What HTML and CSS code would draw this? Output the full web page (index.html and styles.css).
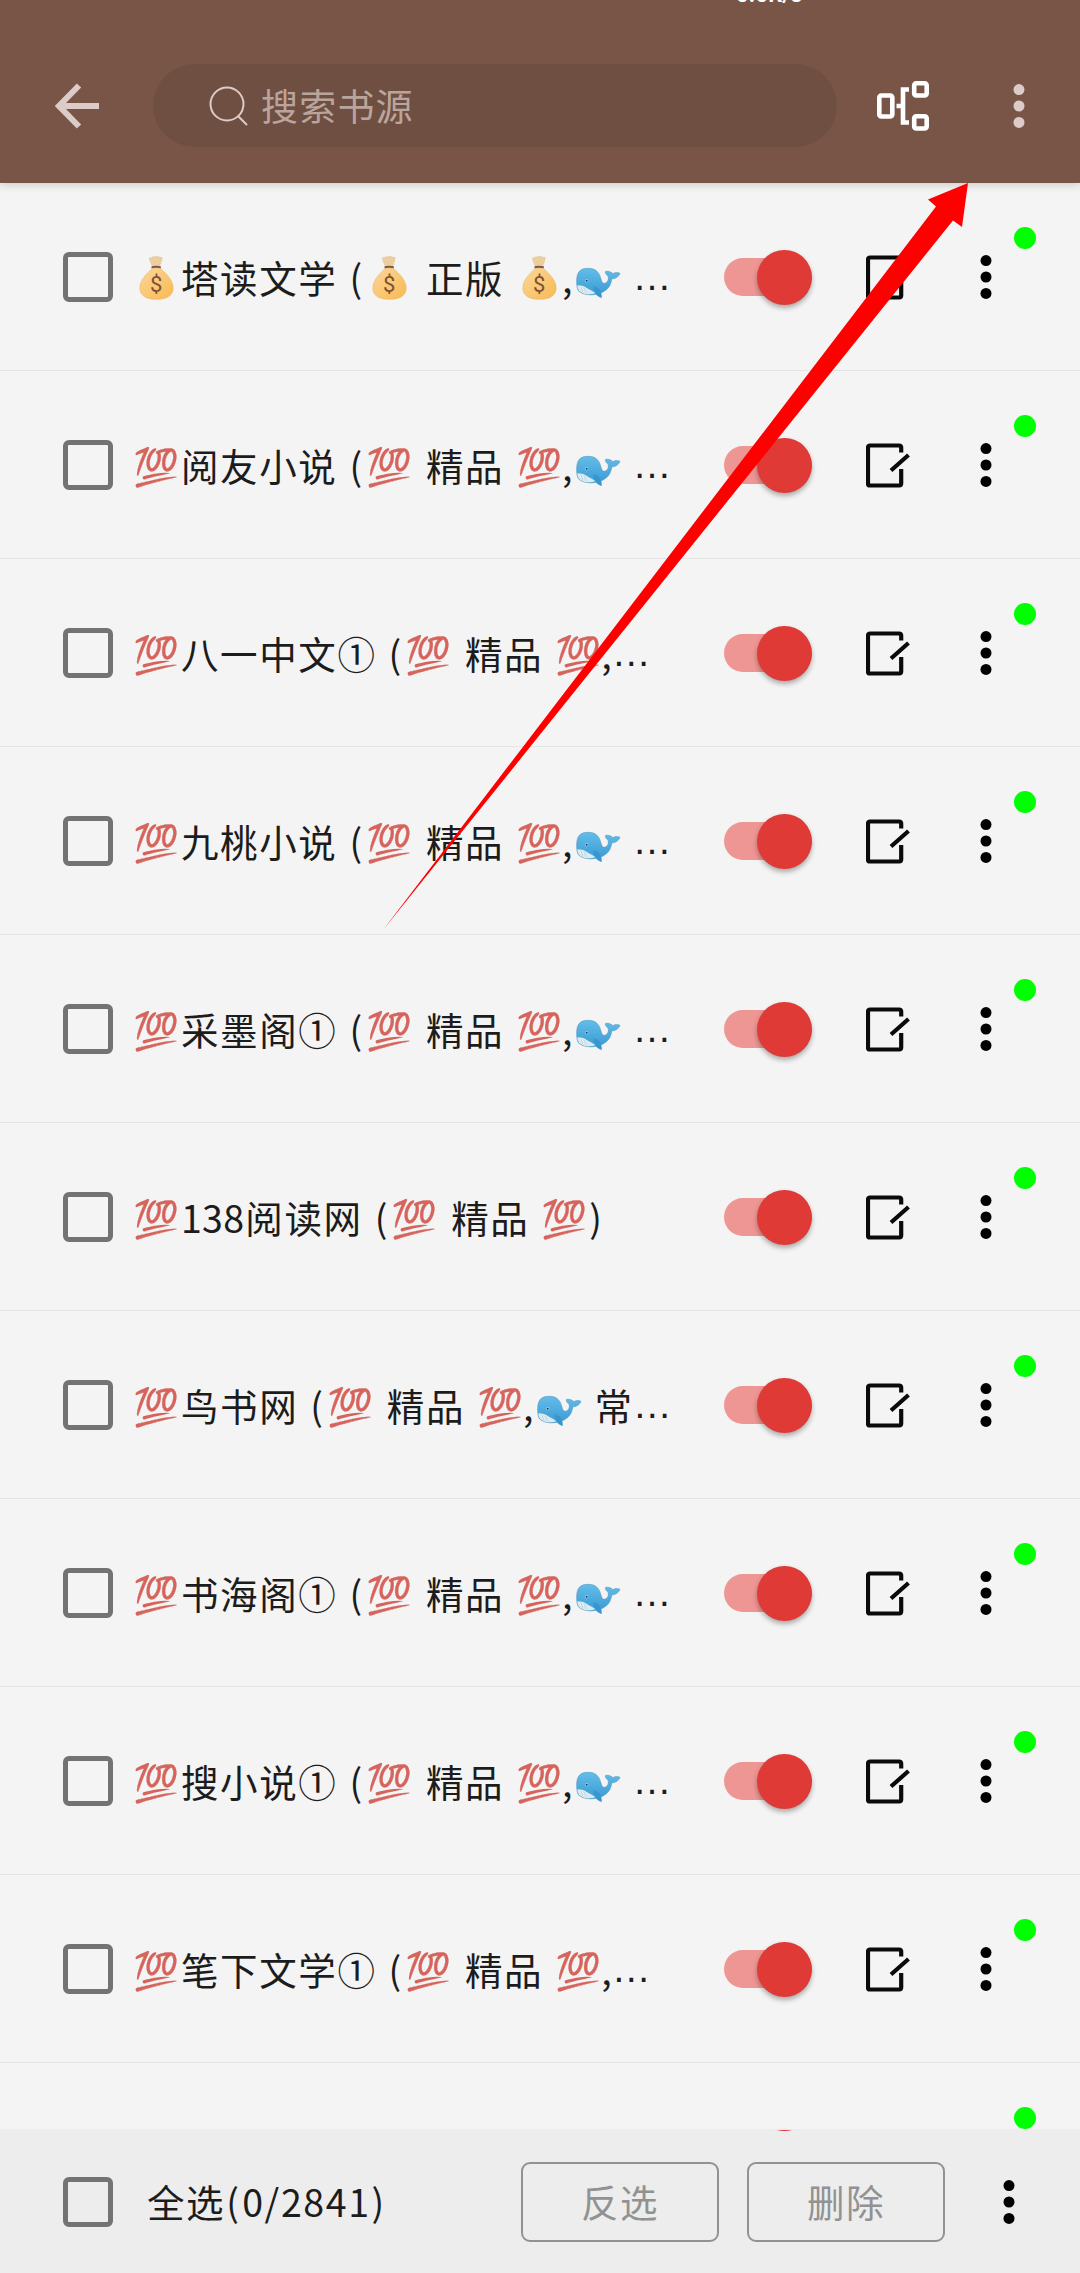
FILE: index.html
```html
<!DOCTYPE html>
<html lang="zh-CN">
<head>
<meta charset="utf-8">
<title>书源管理</title>
<link rel="stylesheet" href="styles.css">
</head>
<body>
<svg class="defs" aria-hidden="true">
  <linearGradient id="sea" x2="0" y2="1"><stop offset="0" stop-color="#63bdea"/><stop offset="1" stop-color="#3b9bd3"/></linearGradient>
  <linearGradient id="gold" x1="0" x2="1" y2="1"><stop offset="0" stop-color="#fbd79b"/><stop offset="1" stop-color="#f9b950"/></linearGradient>
  <symbol id="edit" viewBox="0 0 46 46"><path d="M35.2 10.5V5.5a2 2 0 0 0-2-2H4a2 2 0 0 0-2 2v36a2 2 0 0 0 2 2h29.200a2 2 0 0 0 2-2V27M25 28.500 42.500 13" fill="none" stroke="#0a0a0a" stroke-width="4.200"/></symbol>
  <symbol id="more" viewBox="0 0 12 46"><circle cx="6" cy="6.600" r="5.500"/><circle cx="6" cy="23" r="5.500"/><circle cx="6" cy="39.400" r="5.500"/></symbol>
  <symbol id="whale" viewBox="0 0 138 96">
    <path d="M5 42C5 12 18 4 40 4c24 0 34 14 39 36 4 14 15 10 20 0 2-5 1-10 0-13-7-4-9-10-7-14 10-1 17 2 22 7 6-4 14-4 21-1-4 11-14 16-25 17-2 20-12 34-33 42-22 8-50 8-66-6C6 66 5 54 5 42Z" fill="url(#sea)" stroke="#5b9dbf" stroke-width="2"/>
    <path d="M7 55c14 1 22 3 30 9 8 5 16 8 25 15-18 6-40 3-50-8-3-4-5-10-5-16Z" fill="#dcebf2"/>
    <path d="M18 60l5 15M28 63l6 16" stroke="#b5ccd8" stroke-width="2"/>
    <path d="M56 57c-1 17 7 31 24 36 1-11-2-20-10-30Z" fill="#3796cf"/>
    <circle cx="35" cy="41" r="5" fill="#a5ddf5"/><circle cx="35" cy="41" r="3" fill="#14384e"/>
  </symbol>
  <symbol id="bag" viewBox="0 0 104 132">
    <path d="M40 31C34 20 31 11 31 5c6 2 8-2 12-3 4 2 8-1 12-1 5 2 7 4 14 3-1 10-4 18-8 27Z" fill="#edcf9f" stroke="#dfbd86" stroke-width="1.500"/>
    <path d="M38 38c8-3 18-3 27 0 17 16 37 34 37 58 0 25-22 34-50 34S2 121 2 96c0-24 20-42 36-58Z" fill="url(#gold)" stroke="#e7b15e" stroke-width="1.500"/>
    <path d="M37 31q14-3 28 0v6q-14-3-28 0Z" fill="#7c5943"/>
    <text x="51" y="109" text-anchor="middle" font-family="Roboto" font-size="66" letter-spacing="0" fill="#7c5138">$</text>
  </symbol>
</svg>
<header class="toolbar">
  <span class="net-speed">0.0K/s</span>
  <svg class="back" viewBox="0 0 44 46"><path d="M24 2.500 4 23l20 20.500M4 23h40" fill="none" stroke="#dccbc6" stroke-width="6"/></svg>
  <div class="search">
    <svg class="lens" viewBox="0 0 40 40"><circle cx="18" cy="18" r="16.500"/><path d="M29.500 30.500 38 39"/></svg>
    <span class="hint">搜索书源</span>
  </div>
  <svg class="tree" viewBox="0 0 52 50" fill="none" stroke="#fff" stroke-width="4.600"><rect x="2.300" y="14.500" width="13" height="21" rx="2"/><rect x="37.200" y="2.300" width="12.500" height="12.200" rx="2"/><rect x="37.200" y="35.300" width="12.500" height="12.200" rx="2"/><path d="M32 8.500h-6v33h6M19.500 25H26"/></svg>
  <svg class="more header-more"><use href="#more"/></svg>
</header>
<main class="list" id="list"></main>
<footer class="actions">
  <span class="check"></span>
  <span class="all">全选<i class="fp">(</i>0/2841<i class="fp">)</i></span>
  <button class="btn"><span class="hint">反选</span></button>
  <button class="btn"><span class="hint">删除</span></button>
  <svg class="more footer-more"><use href="#more"/></svg>
</footer>
<svg class="pointer" viewBox="0 0 1080 2273"><path d="M968 183 928 199.500 936 206.500 383 930 953 220.500 962 227Z" fill="#f00"/></svg>
<script src="rows.js"></script>
</body>
</html>
```
FILE: styles.css
```css
* { box-sizing: border-box; }
body {
  margin: 0;
  width: 1080px;
  height: 2273px;
  overflow: hidden;
  position: relative;
  background: #f4f4f4;
  color: #1c1c1c;
  font-family: "Noto Sans CJK SC", sans-serif;
  font-size: 37.5px;
  letter-spacing: 1.6px;
}
.defs { position: absolute; width: 0; height: 0; }
svg { display: block; flex: none; }
.toolbar {
  position: relative;
  z-index: 2;
  height: 183px;
  padding: 64px 55px 36px 55px;
  display: flex;
  align-items: center;
  background: #795548;
  box-shadow: 0 1px 9px rgba(0, 30, 20, .22);
}
.net-speed {
  position: absolute;
  left: 736px;
  top: -18px;
  font: bold 22px/26px Roboto, sans-serif;
  letter-spacing: .2px;
  color: #fff;
}
.back { width: 44px; height: 46px; }
.search {
  width: 684px;
  height: 83px;
  margin-left: 54px;
  padding-left: 56px;
  border-radius: 42px;
  background: #704f43;
  display: flex;
  align-items: center;
  gap: 12px;
  color: #baa59d;
  font-size: 37px;
  letter-spacing: 1.2px;
}
.hint { display: block; padding-bottom: 2px; }
.lens { width: 40px; height: 40px; fill: none; stroke: #dccbc6; stroke-width: 2; }
.tree { width: 52px; height: 50px; margin-left: 40px; }
.more { width: 12px; height: 46px; fill: #000; }
.header-more { margin-left: 84px; fill: #dccbc6; }
.list { position: relative; z-index: 1; height: 1948px; overflow: hidden; }
.row {
  position: relative;
  height: 188px;
  padding: 1px 87px 0 63px;
  border-bottom: 1px solid #e5e5e5;
  display: flex;
  align-items: center;
}
.check {
  width: 50px;
  height: 50px;
  flex: none;
  border: 5.500px solid #737373;
  border-radius: 6px;
}
.name {
  width: 592px;
  margin-left: 19px;
  display: flex;
  align-items: center;
  white-space: pre;
  line-height: 56px;
}
.name > * { flex: none; }
.emoji { width: 48px; height: 58px; font-size: 37px; letter-spacing: 0; text-align: center; opacity: .85; filter: saturate(.75); }
.whale { width: 46px; height: 32px; margin: 12px 0 0 2px; }
.bag { width: 35px; height: 44px; margin: 2px 6px 0 7px; }
.txt { margin: 0 -1px 0 1px; }
.num { margin-left: 1px; letter-spacing: .3px; }
.sp { width: 12px; }
.lp { width: 16.500px; padding-left: 1px; }
.cm { width: 9.500px; text-indent: -1px; }
.dots { font-family: "Liberation Sans", sans-serif; font-size: 39px; letter-spacing: 0; }
.switch {
  width: 88px;
  height: 38px;
  border-radius: 19px;
  background: #ee9694;
  display: flex;
  align-items: center;
  justify-content: flex-end;
}
.thumb {
  width: 55px;
  height: 55px;
  flex: none;
  border-radius: 50%;
  background: #df3a36;
  box-shadow: 0 3px 5px rgba(0, 0, 0, .3);
}
.edit { width: 46px; height: 46px; margin-left: 54px; }
.row .more { margin-left: 68px; }
.state {
  position: absolute;
  right: 44px;
  top: 44px;
  width: 22px;
  height: 22px;
  border-radius: 50%;
  background: #0f0;
}
.actions {
  height: 144px;
  margin-top: -2px;
  padding: 1px 65px 0 63px;
  display: flex;
  align-items: center;
  background: #ededed;
}
.all { width: 374px; margin-left: 34px; padding-bottom: 2px; white-space: nowrap; }
.fp { display: inline-block; width: 17px; padding-left: 1px; font-style: normal; }
.btn {
  width: 198px;
  height: 80px;
  margin-right: 28px;
  padding: 0;
  border: 2px solid #929292;
  border-radius: 9px;
  background: none;
  color: #929292;
  font: inherit;
  letter-spacing: inherit;
}
.footer-more { margin-left: 30px; }
.pointer { position: absolute; z-index: 3; left: 0; top: 0; width: 1080px; height: 2273px; }
```
FILE: rows.js
```js
const names = [
  "💰塔读文学 (💰 正版 💰,🐳 …",
  "💯阅友小说 (💯 精品 💯,🐳 …",
  "💯八一中文① (💯 精品 💯,…",
  "💯九桃小说 (💯 精品 💯,🐳 …",
  "💯采墨阁① (💯 精品 💯,🐳 …",
  "💯138阅读网 (💯 精品 💯)",
  "💯鸟书网 (💯 精品 💯,🐳 常…",
  "💯书海阁① (💯 精品 💯,🐳 …",
  "💯搜小说① (💯 精品 💯,🐳 …",
  "💯笔下文学① (💯 精品 💯,…",
  ""
];
const kinds = { " ": "sp", "(": "lp", ")": "lp", ",": "cm", "…": "dots", "💯": "emoji" };
const drawings = { "💰": "bag", "🐳": "whale" };

function piece(part) {
  const art = drawings[part];
  if (art) return `<svg class="${art}" role="img" aria-label="${part}"><use href="#${art}"/></svg>`;
  const kind = kinds[part] || (/^\d+$/.test(part) ? "num" : "txt");
  return `<span class="${kind}">${part}</span>`;
}

function label(name) {
  return name.split(/([ (),…]|\d+|💰|💯|🐳)/u).filter(Boolean).map(piece).join("");
}

document.getElementById("list").innerHTML = names.map(name => `
  <div class="row">
    <span class="check"></span>
    <div class="name">${label(name)}</div>
    <div class="switch"><span class="thumb"></span></div>
    <svg class="edit"><use href="#edit"/></svg>
    <svg class="more"><use href="#more"/></svg>
    <span class="state"></span>
  </div>`).join("");
```
